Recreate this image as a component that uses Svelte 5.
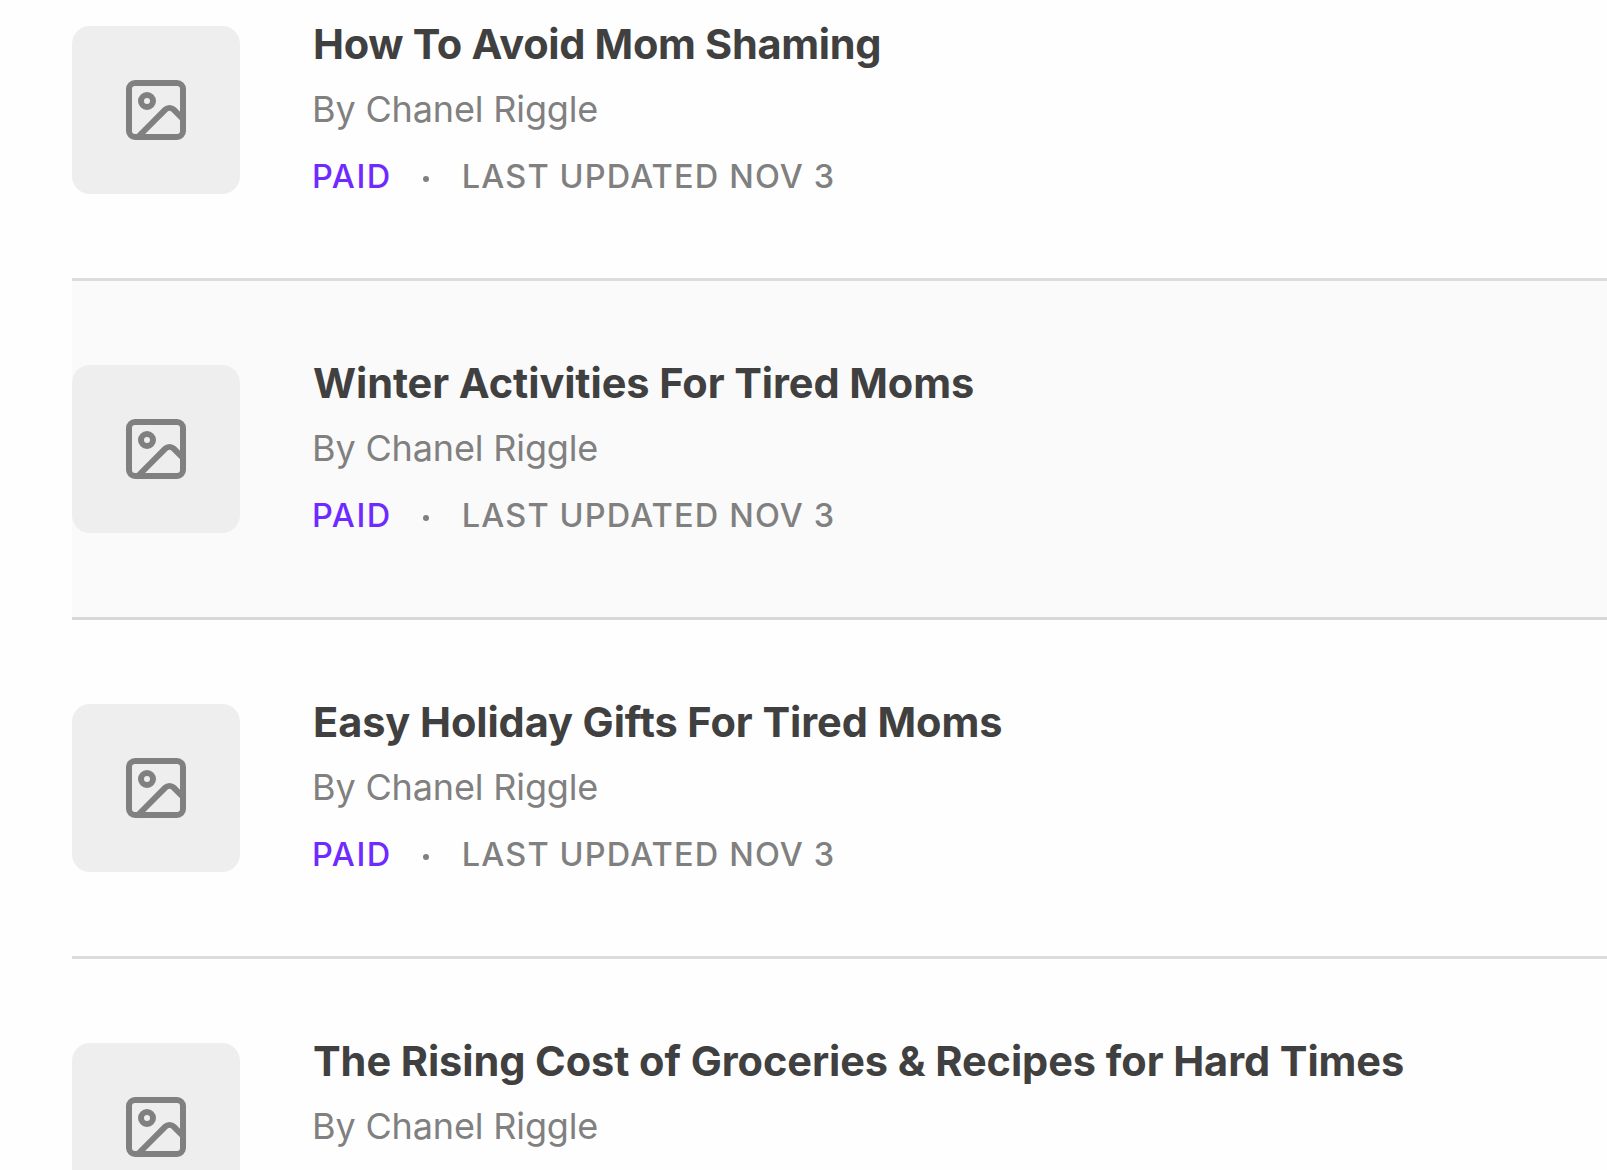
<script lang="ts">
	interface Post {
		title: string;
		author: string;
		access?: string;
		updated?: string;
		highlighted?: boolean;
	}

	const posts: Post[] = [
		{ title: 'How To Avoid Mom Shaming', author: 'Chanel Riggle', access: 'Paid', updated: 'Nov 3' },
		{ title: 'Winter Activities For Tired Moms', author: 'Chanel Riggle', access: 'Paid', updated: 'Nov 3', highlighted: true },
		{ title: 'Easy Holiday Gifts For Tired Moms', author: 'Chanel Riggle', access: 'Paid', updated: 'Nov 3' },
		{ title: 'The Rising Cost of Groceries & Recipes for Hard Times', author: 'Chanel Riggle' }
	];
</script>

<main class="post-list">
	{#each posts as post}
		<article class="post" class:highlighted={post.highlighted}>
			<div class="thumb">
				<svg width="72" height="72" viewBox="0 0 24 24" fill="none" stroke="currentColor" stroke-width="2" stroke-linecap="round" stroke-linejoin="round">
					<rect x="3" y="3" width="18" height="18" rx="2" />
					<circle cx="9" cy="9" r="2" />
					<path d="m21 15-3.086-3.086a2 2 0 0 0-2.828 0L6 21" />
				</svg>
			</div>
			<div class="details">
				<h2 class="title">{post.title}</h2>
				<p class="byline">By {post.author}</p>
				{#if post.access}
					<div class="meta">
						<span class="access">{post.access}</span>
						<span class="dot"></span>
						<span class="updated">Last updated {post.updated}</span>
					</div>
				{/if}
			</div>
		</article>
	{/each}
</main>

<style>
	:global(body) {
		background: #fefefe;
	}

	.post-list {
		height: 1170px;
		padding-left: 72px;
		box-sizing: border-box;
		overflow: hidden;
		font-family: Inter, 'Liberation Sans', sans-serif;
	}

	.post {
		display: flex;
		gap: 73px;
		padding: 84px 0;
		border-bottom: 3px solid #dcdcdc;
	}

	.post:first-child {
		padding-top: 26px;
	}

	.post.highlighted {
		background: #fafafa;
		border-bottom-color: #d8d8d8;
	}

	.thumb {
		display: flex;
		align-items: center;
		justify-content: center;
		flex-shrink: 0;
		width: 168px;
		height: 168px;
		border-radius: 18px;
		background: #eeeeee;
		color: #808080;
	}

	.thumb svg {
		display: block;
	}

	.details {
		white-space: nowrap;
	}

	.title {
		margin: 0 0 29px;
		font-size: 41.5px;
		font-weight: 700;
		line-height: 36px;
		letter-spacing: -0.08px;
		color: #404040;
	}

	.post:first-child .title {
		letter-spacing: -0.32px;
	}

	.byline {
		margin: 0 0 32px -1px;
		font-size: 36px;
		line-height: 36px;
		letter-spacing: -0.15px;
		color: #808080;
	}

	.meta {
		display: flex;
		align-items: center;
		height: 35px;
		margin-left: -1px;
		font-size: 32.5px;
		font-weight: 450;
		line-height: 36px;
		text-transform: uppercase;
		color: #808080;
	}

	.access {
		letter-spacing: 1.5px;
		color: #6f2aff;
	}

	.dot {
		width: 6px;
		height: 6px;
		margin: 4px 33px 0 31px;
		border-radius: 50%;
		background: #808080;
	}

	.updated {
		letter-spacing: 1.15px;
	}
</style>
